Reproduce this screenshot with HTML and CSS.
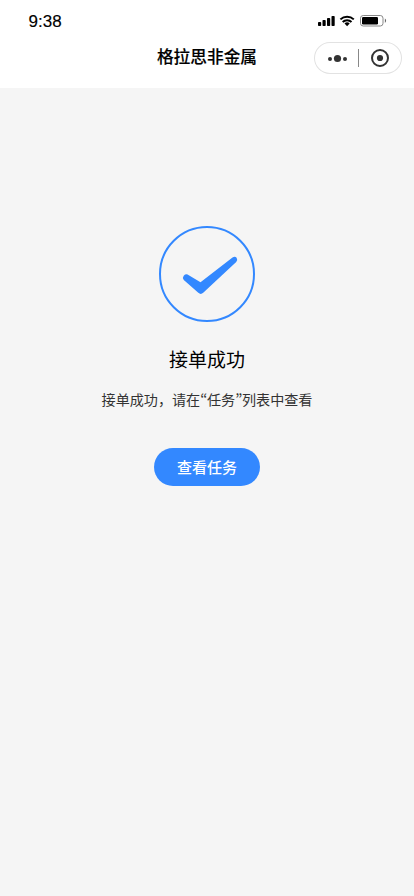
FILE: index.html
```html
<!DOCTYPE html>
<html lang="zh-CN">
<head>
<meta charset="utf-8">
<meta name="viewport" content="width=device-width, initial-scale=1">
<title>接单成功</title>
<link rel="stylesheet" href="styles.css">
</head>
<body>
<header class="header">
  <div class="status">
    <span class="time">9:38</span>
    <svg class="status-icons" width="70" height="14" viewBox="0 0 70 14">
      <g fill="#000">
        <rect x="1" y="8" width="3.2" height="4" rx=".8"/>
        <rect x="5.5" y="6" width="3.2" height="6" rx=".8"/>
        <rect x="10" y="4" width="3.2" height="8" rx=".8"/>
        <rect x="14.5" y="2" width="3.2" height="10" rx=".8"/>
      </g>
      <g fill="none" stroke="#000" stroke-width="2">
        <path d="M23.4 5.4a9.7 9.7 0 0 1 13.4 0"/>
        <path d="M25.7 8a6.2 6.2 0 0 1 8.8 0"/>
      </g>
      <path d="M27.5 9.6a3.7 3.7 0 0 1 5.2 0L30.1 12.2z"/>
      <rect x="43.5" y="1.5" width="22.5" height="10.5" rx="2.7" fill="none" stroke="#888"/>
      <rect x="45" y="3" width="16" height="7.5" rx="1.2"/>
      <path d="M67.9 4.6q2.4 2.2 0 4.4z" fill="#666"/>
    </svg>
  </div>
  <div class="nav">
    <h1 class="title">格拉思非金属</h1>
    <div class="capsule">
      <svg width="88" height="32" viewBox="0 0 88 32">
        <g fill="#333">
          <circle cx="16" cy="17" r="2"/>
          <circle cx="23.5" cy="16.5" r="3.6"/>
          <circle cx="31" cy="17" r="2"/>
          <circle cx="66" cy="16" r="3.1"/>
        </g>
        <path d="M44.5 7v18" stroke="#888"/>
        <circle cx="66" cy="16" r="8" fill="none" stroke="#333" stroke-width="2"/>
      </svg>
    </div>
  </div>
</header>
<main class="result">
  <svg class="check" width="96" height="96" viewBox="0 0 96 96">
    <circle cx="48" cy="48" r="47" fill="none" stroke="#3388ff" stroke-width="2"/>
    <path d="M24.7 49.8Q27 47.2 29.8 49.2L41.5 56.3L73.5 31.5Q76 29.8 77.6 31.8Q79 34 77.2 36L44.2 66.8Q41.8 69 39.3 66.8L24.8 54Q23 52 24.7 49.8Z" fill="#3388ff"/>
  </svg>
  <h2 class="heading">接单成功</h2>
  <p class="message">接单成功，请在<span class="quote">“</span>任务<span class="quote">”</span>列表中查看</p>
  <button class="button">查看任务</button>
</main>
</body>
</html>
```
FILE: styles.css
```css
* { box-sizing: border-box; }
body {
  margin: 0;
  min-height: 896px;
  background: #f5f5f5;
  color: #000;
  font-family: "Noto Sans CJK SC", sans-serif;
}
.header { height: 88px; background: #fff; }
.status {
  display: flex;
  justify-content: space-between;
  height: 42px;
  padding: 12px 27px 0 28.5px;
}
.time {
  font: 17px/20px "Liberation Sans", sans-serif;
  -webkit-text-stroke: .15px #000;
}
.status-icons { margin-top: 2px; }
.nav {
  display: grid;
  grid-template-columns: 100px 1fr 100px;
  padding: 0 12px;
}
.title {
  grid-column: 2;
  margin: 0;
  text-align: center;
  font-size: 16.7px;
  line-height: 28px;
  font-weight: 500;
  -webkit-text-stroke: .15px #000;
  white-space: nowrap;
}
.capsule {
  justify-self: end;
  width: 88px;
  height: 32px;
  border-radius: 16px;
  box-shadow: inset 0 0 0 1px #e2e2e2;
}
.capsule svg { display: block; }
.result {
  display: flex;
  flex-direction: column;
  align-items: center;
  padding-top: 138px;
}
.check { display: block; }
.heading {
  margin: 22px 0 0;
  font-size: 19px;
  line-height: 30px;
  font-weight: 400;
}
.message {
  height: 22px;
  margin: 14px 0 0;
  color: #333;
  font-size: 14.1px;
  line-height: 22px;
  font-weight: 400;
  white-space: nowrap;
}
.quote {
  display: inline-block;
  width: 6.8px;
  font-family: "Noto Sans CJK KR", sans-serif;
  font-size: 15px;
  text-align: center;
}
.button {
  width: 106px;
  height: 38px;
  margin: 38px 0 0;
  padding: 0;
  border: 0;
  border-radius: 19px;
  background: #3388ff;
  color: #fff;
  font: 500 15px/38px "Noto Sans CJK SC", sans-serif;
}
```
